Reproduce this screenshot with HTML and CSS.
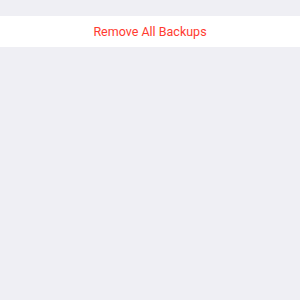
FILE: index.html
```html
<!DOCTYPE html>
<html>
<head>
<meta charset="utf-8">
<link rel="stylesheet" href="styles.css">
</head>
<body>
<div class="page">
  <div class="group">
    <button class="action">Remove All Backups</button>
  </div>
</div>
</body>
</html>
```
FILE: styles.css
```css
html, body {
  margin: 0;
  padding: 0;
  background: #efeff4;
  height: 100%;
}
.page {
  padding-top: 16px;
  font-family: "Roboto", "Liberation Sans", sans-serif;
}
.group {
  background: #ffffff;
}
.action {
  display: block;
  width: 100%;
  height: 31px;
  border: 0;
  margin: 0;
  padding: 0;
  background: transparent;
  color: #ff3b30;
  font-family: inherit;
  font-size: 12.5px;
  text-align: center;
}
```
